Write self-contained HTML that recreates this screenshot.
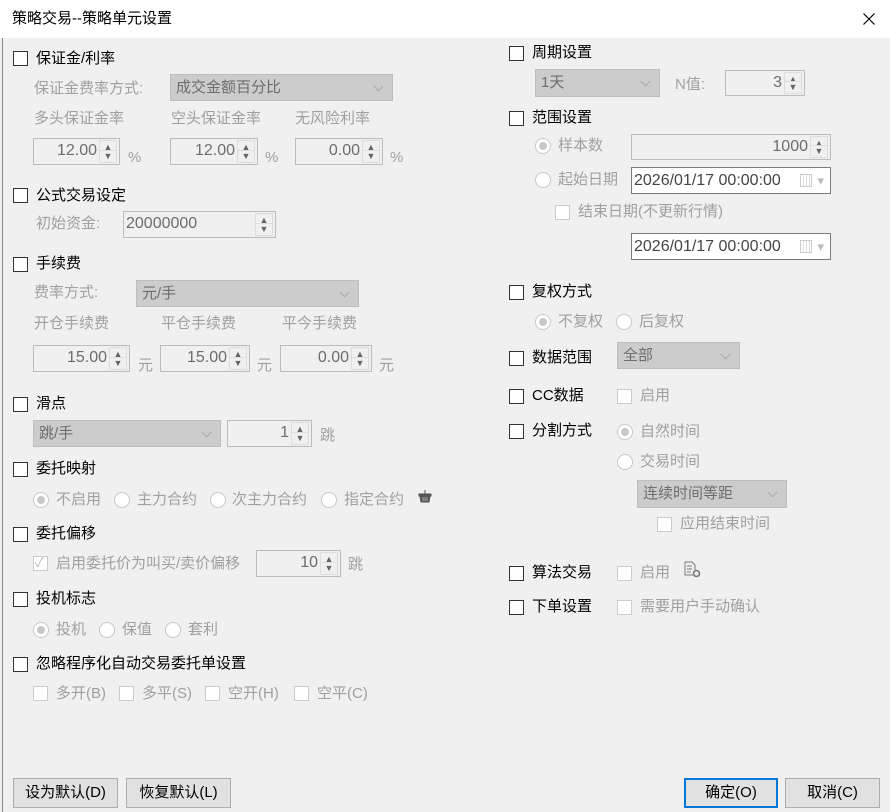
<!DOCTYPE html>
<html><head><meta charset="utf-8"><style>
*{box-sizing:border-box;margin:0;padding:0}
body{width:890px;height:812px;background:#f0f0f0;position:relative;overflow:hidden;font-family:"Liberation Sans","Noto Sans CJK SC",sans-serif;font-size:15px;color:#000}
.a{position:absolute}
.t{position:absolute;height:20px;line-height:20px;white-space:nowrap}
.d{color:#a0a0a0}
.cb{position:absolute;width:15px;height:15px;border:1px solid #333;background:#fff}
.cbd{position:absolute;width:15px;height:15px;border:1px solid #ccc;background:#fff}
.rd{position:absolute;width:16px;height:16px;border:1px solid #c8c8c8;border-radius:50%;background:#fff}
.rd.on::after{content:"";position:absolute;left:3px;top:3px;width:8px;height:8px;border-radius:50%;background:#c8c8c8}
.sel{position:absolute;background:#ccc;border:1px solid #bdbdbd;color:#6d6d6d;padding-left:5px;line-height:25px}
.sel::after{content:"";position:absolute;right:10px;top:8px;width:6px;height:6px;border-right:1px solid #aaa;border-bottom:1px solid #aaa;transform:rotate(45deg)}
.sp{position:absolute;border:1px solid #bcbcbc;background:#f0f0f0;color:#6d6d6d;text-align:right;padding-right:22px;line-height:24px;font-size:16px}
.sp::before{content:"▲";position:absolute;right:2px;top:1px;width:16px;height:12px;font-size:9px;line-height:12px;text-align:center;color:#666;background:#f0f0f0;border:1px solid #ddd}
.sp::after{content:"▼";position:absolute;right:2px;bottom:1px;width:16px;height:11px;font-size:9px;line-height:11px;text-align:center;color:#666;background:#f0f0f0;border:1px solid #ddd}
.dt{position:absolute;background:#fff;border:1px solid #7a7a7a;color:#444;padding-left:2px;line-height:25px;font-size:16px}
.dt::after{content:"▾";position:absolute;right:6px;top:0;color:#bbb;font-size:13px}
.dt i{position:absolute;right:18px;top:6px;width:12px;height:13px;border:1px solid #ccc;background:repeating-linear-gradient(90deg,#fff 0 2px,#ddd 2px 3px)}
.btn{position:absolute;top:778px;height:30px;border:1px solid #adadad;background:#e1e1e1;text-align:center;line-height:28px}
</style></head><body>
<div class="a" style="left:0;top:0;width:890px;height:38px;background:#fff"></div>
<div class="a" style="left:2px;top:38px;width:1px;height:774px;background:#8a8a8a"></div>
<div class="t" style="left:12px;top:9px;font-size:15px">策略交易--策略单元设置</div>
<svg class="a" style="left:863px;top:13px" width="12" height="12" viewBox="0 0 12 12"><path d="M0.5 0.5L11.5 11.5M11.5 0.5L0.5 11.5" stroke="#000" stroke-width="1.2"/></svg>

<div class="cb" style="left:13px;top:51px"></div><div class="t" style="left:36px;top:49px">保证金/利率</div>
<div class="t d" style="left:34px;top:79px">保证金费率方式:</div>
<div class="sel" style="left:170px;top:74px;width:223px;height:27px">成交金额百分比</div>
<div class="t d" style="left:34px;top:109px">多头保证金率</div>
<div class="t d" style="left:171px;top:109px">空头保证金率</div>
<div class="t d" style="left:295px;top:109px">无风险利率</div>
<div class="sp" style="left:33px;top:138px;width:87px;height:27px">12.00</div><div class="t d" style="left:128px;top:148px">%</div>
<div class="sp" style="left:170px;top:138px;width:88px;height:27px">12.00</div><div class="t d" style="left:265px;top:148px">%</div>
<div class="sp" style="left:295px;top:138px;width:88px;height:27px">0.00</div><div class="t d" style="left:390px;top:148px">%</div>

<div class="cb" style="left:13px;top:188px"></div><div class="t" style="left:36px;top:186px">公式交易设定</div>
<div class="t d" style="left:36px;top:214px">初始资金:</div>
<div class="sp" style="left:123px;top:211px;width:153px;height:27px;text-align:left;padding-left:2px">20000000</div>

<div class="cb" style="left:13px;top:257px"></div><div class="t" style="left:36px;top:254px">手续费</div>
<div class="t d" style="left:34px;top:283px">费率方式:</div>
<div class="sel" style="left:136px;top:280px;width:223px;height:27px">元/手</div>
<div class="t d" style="left:34px;top:314px">开仓手续费</div>
<div class="t d" style="left:161px;top:314px">平仓手续费</div>
<div class="t d" style="left:282px;top:314px">平今手续费</div>
<div class="sp" style="left:33px;top:345px;width:97px;height:27px">15.00</div><div class="t d" style="left:138px;top:356px">元</div>
<div class="sp" style="left:160px;top:345px;width:90px;height:27px">15.00</div><div class="t d" style="left:257px;top:356px">元</div>
<div class="sp" style="left:280px;top:345px;width:92px;height:27px">0.00</div><div class="t d" style="left:379px;top:356px">元</div>

<div class="cb" style="left:13px;top:397px"></div><div class="t" style="left:36px;top:394px">滑点</div>
<div class="sel" style="left:33px;top:420px;width:188px;height:27px">跳/手</div>
<div class="sp" style="left:227px;top:420px;width:85px;height:27px">1</div><div class="t d" style="left:320px;top:426px">跳</div>

<div class="cb" style="left:13px;top:462px"></div><div class="t" style="left:36px;top:459px">委托映射</div>
<div class="rd on" style="left:33px;top:492px"></div><div class="t d" style="left:56px;top:490px">不启用</div>
<div class="rd" style="left:114px;top:492px"></div><div class="t d" style="left:137px;top:490px">主力合约</div>
<div class="rd" style="left:210px;top:492px"></div><div class="t d" style="left:232px;top:490px">次主力合约</div>
<div class="rd" style="left:321px;top:492px"></div><div class="t d" style="left:344px;top:490px">指定合约</div>
<svg class="a" style="left:417px;top:489px" width="16" height="16" viewBox="0 0 16 16"><path d="M8 1v4M2 5h12v2H2zM3 7h10l-1 6H4z" fill="#555" stroke="#555"/><path d="M6 8v4M8 8v4M10 8v4" stroke="#aaa"/></svg>

<div class="cb" style="left:13px;top:527px"></div><div class="t" style="left:36px;top:524px">委托偏移</div>
<div class="cbd" style="left:33px;top:556px"></div><div class="t" style="left:35px;top:553px;color:#bbb;font-size:13px">✓</div><div class="t d" style="left:56px;top:554px">启用委托价为叫买/卖价偏移</div>
<div class="sp" style="left:256px;top:550px;width:85px;height:27px">10</div><div class="t d" style="left:348px;top:555px">跳</div>

<div class="cb" style="left:13px;top:592px"></div><div class="t" style="left:36px;top:589px">投机标志</div>
<div class="rd on" style="left:33px;top:622px"></div><div class="t d" style="left:56px;top:620px">投机</div>
<div class="rd" style="left:99px;top:622px"></div><div class="t d" style="left:122px;top:620px">保值</div>
<div class="rd" style="left:165px;top:622px"></div><div class="t d" style="left:188px;top:620px">套利</div>

<div class="cb" style="left:13px;top:657px"></div><div class="t" style="left:36px;top:654px">忽略程序化自动交易委托单设置</div>
<div class="cbd" style="left:33px;top:686px"></div><div class="t d" style="left:56px;top:684px">多开(B)</div>
<div class="cbd" style="left:119px;top:686px"></div><div class="t d" style="left:142px;top:684px">多平(S)</div>
<div class="cbd" style="left:205px;top:686px"></div><div class="t d" style="left:228px;top:684px">空开(H)</div>
<div class="cbd" style="left:294px;top:686px"></div><div class="t d" style="left:317px;top:684px">空平(C)</div>

<div class="cb" style="left:509px;top:46px"></div><div class="t" style="left:532px;top:43px">周期设置</div>
<div class="sel" style="left:535px;top:69px;width:125px;height:28px">1天</div>
<div class="t d" style="left:675px;top:75px">N值:</div>
<div class="sp" style="left:725px;top:70px;width:80px;height:26px">3</div>

<div class="cb" style="left:509px;top:111px"></div><div class="t" style="left:532px;top:108px">范围设置</div>
<div class="rd on" style="left:535px;top:138px"></div><div class="t d" style="left:558px;top:136px">样本数</div>
<div class="sp" style="left:631px;top:134px;width:200px;height:26px">1000</div>
<div class="rd" style="left:535px;top:172px"></div><div class="t d" style="left:558px;top:170px">起始日期</div>
<div class="dt" style="left:631px;top:167px;width:200px;height:27px">2026/01/17 00:00:00<i></i></div>
<div class="cbd" style="left:555px;top:205px"></div><div class="t d" style="left:578px;top:202px">结束日期(不更新行情)</div>
<div class="dt" style="left:631px;top:233px;width:200px;height:27px">2026/01/17 00:00:00<i></i></div>

<div class="cb" style="left:509px;top:285px"></div><div class="t" style="left:532px;top:282px">复权方式</div>
<div class="rd on" style="left:535px;top:314px"></div><div class="t d" style="left:558px;top:312px">不复权</div>
<div class="rd" style="left:616px;top:314px"></div><div class="t d" style="left:639px;top:312px">后复权</div>

<div class="cb" style="left:509px;top:351px"></div><div class="t" style="left:532px;top:348px">数据范围</div>
<div class="sel" style="left:617px;top:342px;width:123px;height:27px">全部</div>

<div class="cb" style="left:509px;top:389px"></div><div class="t" style="left:532px;top:386px">CC数据</div>
<div class="cbd" style="left:617px;top:389px"></div><div class="t d" style="left:640px;top:386px">启用</div>

<div class="cb" style="left:509px;top:424px"></div><div class="t" style="left:532px;top:421px">分割方式</div>
<div class="rd on" style="left:617px;top:424px"></div><div class="t d" style="left:640px;top:422px">自然时间</div>
<div class="rd" style="left:617px;top:454px"></div><div class="t d" style="left:640px;top:452px">交易时间</div>
<div class="sel" style="left:637px;top:480px;width:150px;height:28px">连续时间等距</div>
<div class="cbd" style="left:657px;top:517px"></div><div class="t d" style="left:680px;top:514px">应用结束时间</div>

<div class="cb" style="left:509px;top:566px"></div><div class="t" style="left:532px;top:563px">算法交易</div>
<div class="cbd" style="left:617px;top:566px"></div><div class="t d" style="left:640px;top:563px">启用</div>
<svg class="a" style="left:684px;top:561px" width="17" height="17" viewBox="0 0 17 17"><path d="M1 1h7l3 3v5M1 1v13h8" fill="none" stroke="#777"/><path d="M3 5h5M3 8h5M3 11h4" stroke="#777"/><circle cx="12.5" cy="12.5" r="3" fill="none" stroke="#777" stroke-width="1.6"/></svg>

<div class="cb" style="left:509px;top:600px"></div><div class="t" style="left:532px;top:597px">下单设置</div>
<div class="cbd" style="left:617px;top:600px"></div><div class="t d" style="left:640px;top:597px">需要用户手动确认</div>

<div class="btn" style="left:13px;width:105px">设为默认(D)</div>
<div class="btn" style="left:126px;width:105px">恢复默认(L)</div>
<div class="btn" style="left:684px;width:94px;border:2px solid #0078d7;line-height:26px">确定(O)</div>
<div class="btn" style="left:785px;width:95px">取消(C)</div>
</body></html>
